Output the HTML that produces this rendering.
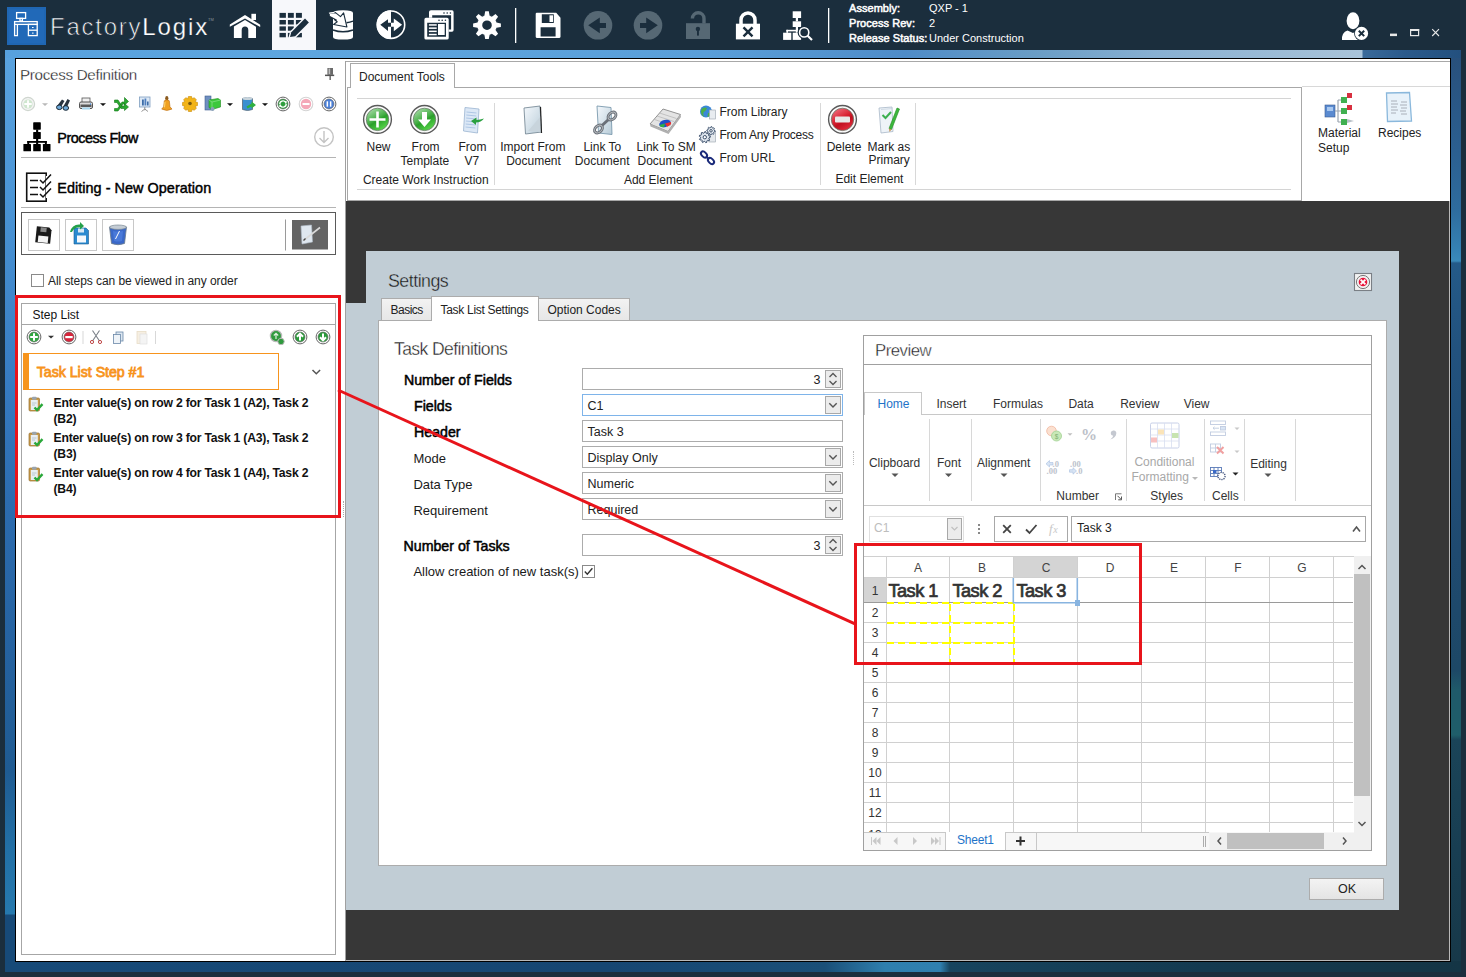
<!DOCTYPE html>
<html><head><meta charset="utf-8">
<style>
*{box-sizing:border-box;margin:0;padding:0}
html,body{width:1466px;height:977px;overflow:hidden;background:#1b2e3d;font-family:"Liberation Sans",sans-serif;color:#1a1a1a}
.a{position:absolute}
.t{position:absolute;white-space:nowrap;line-height:1}
svg{position:absolute;overflow:visible}
</style></head><body>
<!-- top bar -->
<div class="a" style="left:0;top:0;width:1466px;height:50px;background:#1b2e3d"></div>

<!-- TOPBAR -->
<svg class="a" style="left:0;top:0" width="1466" height="50" viewBox="0 0 1466 50">
 <!-- logo -->
 <rect x="7" y="7" width="39" height="38" fill="#1f66b3"/>
 <rect x="9" y="9" width="35" height="34" fill="#2169b8"/>
 <g fill="none" stroke="#fff" stroke-width="1.3">
  <rect x="16.6" y="12.6" width="9" height="5.8"/>
  <rect x="20" y="18.4" width="2.4" height="2.6"/>
  <rect x="14.6" y="21.6" width="22.6" height="2.8"/>
  <path d="M14.6 24.4V35.6H17.4V24.4"/>
  <rect x="28.4" y="24.4" width="8.8" height="11.2"/>
  <path d="M28.4 30.2H37.2"/>
 </g>
 <rect x="32" y="27" width="1.6" height="1" fill="#fff"/>
 <rect x="32" y="32.6" width="1.6" height="1" fill="#fff"/>
 <!-- home -->
 <g fill="#fff">
  <polygon points="229.8,24.6 245,15 260.2,24.8 260.2,27 245,18.6 229.8,26.8"/>
  <rect x="251.4" y="13.8" width="4.6" height="6.2"/>
  <path d="M233.9 26.6 L245 20 L256 26.8 V38.1 H248.3 V30.2 A3.3 3.6 0 0 0 241.7 30.2 V38.1 H233.9 Z"/>
 </g>
 <!-- active tab -->
 <rect x="272" y="0" width="44" height="50" fill="#f7f8fb"/>
 <g fill="#1b2e3d">
  <rect x="279.5" y="12.9" width="6.4" height="4.9"/><rect x="287.9" y="12.9" width="5.9" height="4.9"/><rect x="295.9" y="12.9" width="6" height="4.9"/>
  <rect x="279.5" y="20" width="6.4" height="4.5"/><rect x="287.9" y="20" width="5.9" height="4.5"/><rect x="295.9" y="20" width="6" height="4.5"/>
  <rect x="279.5" y="26.4" width="6.4" height="4.3"/><rect x="287.9" y="26.4" width="5.9" height="4.3"/><rect x="295.9" y="26.4" width="6" height="4.3"/>
  <rect x="279.5" y="32.9" width="6.4" height="4.4"/><rect x="287.9" y="32.9" width="5.9" height="4.4"/><rect x="295.9" y="32.9" width="6" height="4.4"/>
 </g>
 <path d="M289.5 37.5 L291 32 L305 18 L309.5 22.5 L295.5 36.5 Z" fill="#f7f8fb" stroke="#f7f8fb" stroke-width="2"/>
 <path d="M290 37 L291.3 32.3 L305 18.6 L308.9 22.5 L295.2 36.2 Z" fill="#1b2e3d"/>
 <!-- database -->
 <path d="M333 13 Q333 10.3 343 10.3 Q353 10.3 353 13 V37 Q353 39.6 343 39.6 Q333 39.6 333 37 Z" fill="#fff"/>
 <path d="M333 30 Q343 33.6 353 30" fill="none" stroke="#1b2e3d" stroke-width="1.4"/>
 <path d="M346.5 22.8 Q350 22.4 353 21.2" fill="none" stroke="#1b2e3d" stroke-width="1.4"/>
 <path d="M329.2 13 L335.5 12.6 L340.5 16.6 L343.6 12.9 L346.9 27 L333.6 24.5 L337.2 21.8 L334.6 19.7 L336.3 19.9 L329.3 16.3 Z" fill="#fff" stroke="#1b2e3d" stroke-width="1.1" stroke-linejoin="round"/>
 <path d="M329 13.3 Q331 12.4 334.5 12.7" fill="none" stroke="#fff" stroke-width="1.2"/>
 <!-- circle arrows -->
 <circle cx="391" cy="24.7" r="13.7" fill="none" stroke="#fff" stroke-width="1.6"/>
 <path d="M391 10.3 A14.4 14.4 0 0 0 391 39.1 Z" fill="#fff"/>
 <path d="M380.3 24.7 L388 19.2 V22.8 H391 V26.8 H388 V30.9 Z" fill="#1b2e3d"/>
 <path d="M402.1 24.7 L393.8 18.5 V22.8 H391 V26.8 H393.8 V31.2 Z" fill="#fff"/>
 <!-- windows -->
 <g fill="#fff">
  <path d="M429 12 Q429 10.3 431 10.3 H452 Q453.6 10.3 453.6 12 V30 Q453.6 31.8 452 31.8 H448.7 V29.6 H451.1 V15.2 H432.2 V17.7 H429 Z"/>
  <path d="M424.4 19.5 Q424.4 17.7 426 17.7 H447 Q448.7 17.7 448.7 19.5 V38 Q448.7 39.5 447 39.5 H426 Q424.4 39.5 424.4 38 Z M427.2 22.7 V36.7 H446 V22.7 Z"/>
  <rect x="428.9" y="24.2" width="7.8" height="1.5"/><rect x="428.9" y="27.4" width="7.8" height="1.5"/><rect x="428.9" y="30.6" width="7.8" height="1.5"/><rect x="428.9" y="33.8" width="7.8" height="1.5"/>
  <rect x="438" y="24" width="6.7" height="11"/>
 </g>
 <g fill="#1b2e3d"><circle cx="444" cy="13" r="0.8"/><circle cx="447.2" cy="13" r="0.8"/><circle cx="450.4" cy="13" r="0.8"/><circle cx="439" cy="20.2" r="0.8"/><circle cx="442.2" cy="20.2" r="0.8"/><circle cx="445.4" cy="20.2" r="0.8"/></g>
 <!-- gear -->
 <g transform="translate(487 25.2)">
  <path fill="#fff" fill-rule="evenodd" d="M-2.61 -9.44 L-1.81 -13.88 L1.81 -13.88 L2.61 -9.44 L4.83 -8.53 L8.53 -11.10 L11.10 -8.53 L8.53 -4.83 L9.44 -2.61 L13.88 -1.81 L13.88 1.81 L9.44 2.61 L8.53 4.83 L11.10 8.53 L8.53 11.10 L4.83 8.53 L2.61 9.44 L1.81 13.88 L-1.81 13.88 L-2.61 9.44 L-4.83 8.53 L-8.53 11.10 L-11.10 8.53 L-8.53 4.83 L-9.44 2.61 L-13.88 1.81 L-13.88 -1.81 L-9.44 -2.61 L-8.53 -4.83 L-11.10 -8.53 L-8.53 -11.10 L-4.83 -8.53Z M4.8 0 A4.8 4.8 0 1 0 -4.8 0 A4.8 4.8 0 1 0 4.8 0Z"/>
  <circle r="10.3" fill="none" stroke="#fff" stroke-width="0.1"/>
 </g>
 <rect x="515" y="8" width="1.3" height="35" fill="#fff"/>
 <!-- save -->
 <path fill="#fff" fill-rule="evenodd" d="M536.8 12.8 H556.2 L560.5 17.7 V36.8 Q560.5 37.9 559.4 37.9 H536.8 Q535.7 37.9 535.7 36.8 V13.9 Q535.7 12.8 536.8 12.8 Z M541.8 14.3 V22.9 H553.8 V14.3 Z M540.6 27.2 V36.4 H555.6 V27.2 Z"/>
 <rect x="549.5" y="15.3" width="3.5" height="6.7" fill="#fff"/>
 <!-- back / fwd -->
 <circle cx="598" cy="25.3" r="14.3" fill="#566874"/>
 <path d="M588.2 25.3 L599.8 17.4 V22.9 H606 V28.1 H599.8 V33.3 Z" fill="#1b2e3d"/>
 <circle cx="648" cy="25.3" r="14.3" fill="#566874"/>
 <path d="M657.8 25.3 L646.2 17.4 V22.9 H640 V28.1 H646.2 V33.3 Z" fill="#1b2e3d"/>
 <!-- open lock -->
 <rect x="686" y="23.2" width="24" height="15.8" fill="#566874"/>
 <path d="M692.4 18.5 A5.8 5.8 0 0 1 704 18.5 V23.5" fill="none" stroke="#566874" stroke-width="3.4"/>
 <circle cx="697.9" cy="28.9" r="2.2" fill="#1b2e3d"/>
 <rect x="697" y="29" width="1.9" height="6.6" fill="#1b2e3d"/>
 <!-- lock x -->
 <rect x="735.9" y="23.7" width="24.1" height="15.7" fill="#fff"/>
 <path d="M741 24 V20 A7 7 0 0 1 755 20 V24" fill="none" stroke="#fff" stroke-width="3.5"/>
 <path d="M743.5 27.3 L752.5 36.3 M752.5 27.3 L743.5 36.3" stroke="#1b2e3d" stroke-width="2.4"/>
 <!-- hierarchy -->
 <g fill="#fff">
  <rect x="792.7" y="11.3" width="8.4" height="6.7"/>
  <rect x="795.8" y="18" width="2.2" height="3.3"/>
  <rect x="792.7" y="21.3" width="8.4" height="5.7"/>
  <rect x="795.8" y="27" width="2.2" height="5.7"/>
  <rect x="786.4" y="29.8" width="10" height="1.6"/>
  <rect x="786.4" y="29.8" width="1.6" height="3"/>
  <rect x="783.1" y="32.7" width="8.2" height="7.2"/>
  <rect x="792.7" y="32.7" width="8.4" height="7.2"/>
 </g>
 <circle cx="804.2" cy="32.4" r="6.6" fill="#1b2e3d"/>
 <circle cx="804.2" cy="32.4" r="4.6" fill="none" stroke="#fff" stroke-width="1.6"/>
 <path d="M807.6 35.8 L812 40" stroke="#fff" stroke-width="2.2"/>
 <rect x="828" y="8" width="1.3" height="35" fill="#fff"/>
 <!-- user -->
 <g fill="#fff">
  <ellipse cx="1353" cy="20.8" rx="6.4" ry="8.5"/>
  <path d="M1342 40 Q1341.5 32.5 1347.5 30.5 L1353 33 L1357 31 L1360 40 Z"/>
  <circle cx="1361.5" cy="33.4" r="7.4" fill="#1b2e3d"/>
  <circle cx="1361.5" cy="33.4" r="6.6"/>
 </g>
 <path d="M1358.8 30.7 L1364.2 36.1 M1364.2 30.7 L1358.8 36.1" stroke="#1b2e3d" stroke-width="2"/>
 <!-- window controls -->
 <rect x="1390" y="33.6" width="7" height="2.5" fill="#e8e8e8"/>
 <rect x="1410.6" y="29.6" width="8" height="6" fill="none" stroke="#e8e8e8" stroke-width="1.2"/>
 <rect x="1410" y="29" width="9.2" height="2" fill="#e8e8e8"/>
 <path d="M1432.2 29.2 L1439 36 M1439 29.2 L1432.2 36" stroke="#e8e8e8" stroke-width="1.1"/>
</svg>
<div class="t" style="left:50px;top:14.5px;font-size:24px;color:#f4f6f8;letter-spacing:1.75px;-webkit-text-stroke:0.7px #1b2e3d">Factory<span style="color:#fff;letter-spacing:1.9px;-webkit-text-stroke:0.25px #1b2e3d">Logix</span></div>
<div class="t" style="left:208px;top:18px;font-size:4px;color:#8a949c">TM</div>
<div class="t" style="left:849px;top:1px;font-size:11px;line-height:15.2px;color:#fff;letter-spacing:0.05px;-webkit-text-stroke:0.5px #fff">Assembly:<br>Process Rev:<br>Release Status:</div>
<div class="t" style="left:929px;top:1px;font-size:11px;line-height:15.2px;color:#fff">QXP - 1<br>2<br>Under Construction</div>
<!-- blue window frame -->
<div class="a" style="left:5px;top:50px;width:10px;height:922px;background:linear-gradient(180deg,#5aa3df 0px,#4b95d6 150px,#3a80c6 300px,#2c6cb0 450px,#2562a0 600px,#1f5b92 720px,#2270a6 800px,#2679ae 864px,#174a78 865px,#174a78 922px)"></div>
<div class="a" style="left:1450px;top:50px;width:11px;height:922px;background:linear-gradient(180deg,#284f7a 0px,#2b5f90 100px,#2e6c9e 160px,#3582b4 200px,#3a8aba 211px,#245a88 213px,#22527e 300px,#1f4a70 500px,#1d4866 620px,#1f5a6a 640px,#1f5e6a 685px,#1a4458 690px,#183e52 800px,#173848 922px)"></div>
<div class="a" style="left:5px;top:50px;width:1456px;height:8px;background:linear-gradient(90deg,#57a1de 0px,#5ea6df 300px,#5a9fd9 700px,#4f8cc8 900px,#6a9dc5 1030px,#88b0d2 1150px,#a7c2d8 1340px,#a9c4da 1357px,#3a6a9a 1358px,#2b5a8b 1400px,#23507e 1456px)"></div>
<div class="a" style="left:5px;top:961px;width:1456px;height:11px;background:linear-gradient(90deg,#174a78 0px,#164672 600px,#1a4f78 820px,#2f7fae 880px,#3080b0 935px,#17445e 945px,#143a50 1200px,#143545 1456px)"></div>
<!-- inner black border -->
<div class="a" style="left:15px;top:58px;width:1436px;height:904px;background:#000"></div>
<!-- left panel white -->
<div class="a" style="left:16px;top:59px;width:329px;height:902px;background:#fff"></div>
<!-- right white ribbon area -->
<div class="a" style="left:345px;top:59px;width:1105px;height:142px;background:#fff"></div>
<!-- dark workspace -->
<div class="a" style="left:346px;top:201px;width:1103px;height:759px;background:#373737"></div>
<div class="a" style="left:345px;top:201px;width:1px;height:760px;background:#9a9a9a"></div>
<div class="a" style="left:346px;top:960px;width:1104px;height:1px;background:#b8b8b8"></div>
<div class="a" style="left:1449px;top:201px;width:1px;height:760px;background:#b8b8b8"></div>

<!-- LEFT PANEL CONTENT -->
<div class="t" style="left:20px;top:67.4px;font-size:15.2px;color:#111;letter-spacing:-0.3px;-webkit-text-stroke:0.3px #fff">Process Definition</div>
<svg class="a" style="left:0;top:0" width="346" height="300">
 <!-- pin -->
 <rect x="327.4" y="68" width="5.6" height="6.8" fill="#6a6a6a"/>
 <rect x="328.6" y="68.6" width="1.6" height="5.6" fill="#bdbdbd"/>
 <rect x="325" y="74.6" width="9.2" height="1.5" fill="#555"/>
 <rect x="329.5" y="76" width="1.3" height="4" fill="#555"/>
 <!-- toolbar row -->
 <circle cx="28" cy="104" r="6.6" fill="#f4f4f4" stroke="#cfd6cf" stroke-width="1.2"/>
 <circle cx="28" cy="104" r="4.6" fill="#cfe6cf"/>
 <path d="M28 100.3V107.7M24.3 104H31.7" stroke="#fff" stroke-width="1.8"/>
 <path d="M42 103.3H48L45 106Z" fill="#b8b8b8"/>
 <!-- binoculars -->
 <g transform="translate(56 98)">
  <path d="M1 8 L6 1.5 L8.5 3 L4 10.5Z" fill="#2a3440"/>
  <path d="M7 9 L11.5 1 L14 2.5 L10 11Z" fill="#2a3440"/>
  <ellipse cx="3.3" cy="9.3" rx="2.8" ry="2.3" fill="#6ea8d8" stroke="#1d2a36" stroke-width="1"/>
  <ellipse cx="9.8" cy="10" rx="2.8" ry="2.3" fill="#6ea8d8" stroke="#1d2a36" stroke-width="1"/>
 </g>
 <!-- printer -->
 <g transform="translate(79 98)">
  <rect x="3" y="0" width="8" height="5" fill="#f0f0f0" stroke="#555" stroke-width="0.8"/>
  <rect x="0.5" y="4" width="13" height="6.5" rx="1.5" fill="#dcdcdc" stroke="#444" stroke-width="0.9"/>
  <rect x="1.5" y="6.5" width="11" height="2.5" fill="#5a5a5a"/>
  <rect x="3" y="9.5" width="8" height="2" fill="#a8d8f0"/>
  <rect x="11" y="5.5" width="1" height="1.2" fill="#2a7de0"/>
 </g>
 <path d="M100 103.3H106L103 106Z" fill="#111"/>
 <!-- green shuffle -->
 <path d="M114.5 100 H118 L122 106 H124.5 V103.5 L128.5 107 L124.5 110.5 V108.5 H121 L117 102.5 H114.5Z M114.5 108.5 H117.5 L119 106.5 L120.5 104.5 L122 102 H124.5 V97.5 L128.5 101.5 L124.5 105 V104 H123 L119.5 109 L118 111 H114.5Z" fill="#2aa830" stroke="#137a18" stroke-width="0.6"/>
 <!-- presentation -->
 <g transform="translate(139 96.5)">
  <rect x="0.5" y="0.5" width="10.5" height="10" fill="#dce8f5" stroke="#7f9fc0" stroke-width="0.8"/>
  <rect x="3" y="3" width="1.8" height="6" fill="#3d6da8"/><rect x="5.5" y="2" width="1.8" height="7" fill="#5080c0"/><rect x="8" y="5" width="1.6" height="4" fill="#3d6da8"/>
  <path d="M5.8 10.5 V13.8 M5.8 12.5 L2.5 15 M5.8 12.5 L9 15" stroke="#888" stroke-width="0.9"/>
 </g>
 <!-- bell -->
 <g transform="translate(161.5 95.8)">
  <ellipse cx="5.3" cy="2.5" rx="1.6" ry="2.4" fill="#8a5a20"/>
  <path d="M2.8 5 Q5.3 3 7.8 5 L8.5 11 L10.5 13.3 Q5.3 16 0.2 13.3 L2.1 11Z" fill="#f0a020" stroke="#b86a10" stroke-width="0.6"/>
  <path d="M3.5 6 L3 11.5" stroke="#ffd870" stroke-width="1"/>
 </g>
 <!-- gear yellow -->
 <g transform="translate(190 104)">
  <path d="M-1.6 -7.5H1.6L2.2 -5.3L4.3 -6.3L6.3 -4.3L5.3 -2.2L7.5 -1.6V1.6L5.3 2.2L6.3 4.3L4.3 6.3L2.2 5.3L1.6 7.5H-1.6L-2.2 5.3L-4.3 6.3L-6.3 4.3L-5.3 2.2L-7.5 1.6V-1.6L-5.3 -2.2L-6.3 -4.3L-4.3 -6.3L-2.2 -5.3Z" fill="#f2b418" stroke="#c98a08" stroke-width="0.6"/>
  <circle cx="0" cy="-0.5" r="1.8" fill="#7a5a10"/>
 </g>
 <!-- green box icon -->
 <g transform="translate(205 96)">
  <rect x="0" y="0" width="6" height="14" fill="#6f8fc0" stroke="#40608f" stroke-width="0.6"/>
  <path d="M4 4 L13 2.5 L15.5 4 L15.5 11 L7 13.5 L4 11.5Z" fill="#3cc83c" stroke="#1f8a1f" stroke-width="0.6"/>
  <path d="M4 4 L7 6 L15.5 4 M7 6 V13.5" stroke="#9ae89a" stroke-width="0.6" fill="none"/>
  <circle cx="7.5" cy="13" r="2" fill="#8aa0b8"/>
 </g>
 <path d="M227 103.3H233L230 106Z" fill="#111"/>
 <!-- bin with arrow -->
 <g transform="translate(241.5 96.5)">
  <path d="M1 2 Q6 0 11 2 V13 Q6 15 1 13Z" fill="#3a8fd0" stroke="#5a6a78" stroke-width="0.8"/>
  <ellipse cx="6" cy="2" rx="5" ry="1.5" fill="#c8d4dc"/>
  <path d="M5 10 L10 7 L10 5 L14.5 8.5 L10 12 L10 10 L6 12Z" fill="#30b040"/>
 </g>
 <path d="M262 103.3H268L265 106Z" fill="#111"/>
 <!-- circles -->
 <circle cx="283" cy="104" r="6.9" fill="#fff" stroke="#666" stroke-width="1"/>
 <circle cx="283" cy="104" r="5" stroke="#606060" stroke-width="0.6" fill="#2e9e3e"/>
 <path d="M279.8 104.3 A3.2 3.2 0 0 1 285.6 102.2 M286.2 103.7 A3.2 3.2 0 0 1 280.4 105.8" fill="none" stroke="#fff" stroke-width="1.3"/><path d="M284 101 L287.2 101.6 L285.8 104Z M282 107 L278.8 106.4 L280.2 104Z" fill="#fff"/>
 <circle cx="306" cy="104" r="6.8" fill="#fff" stroke="#d4d4d4" stroke-width="1.1"/>
 <circle cx="306" cy="104" r="5.2" fill="#f4a8b8"/>
 <rect x="302.5" y="103" width="7" height="2" fill="#fff"/>
 <circle cx="329" cy="104" r="6.9" fill="#fff" stroke="#666" stroke-width="1"/>
 <circle cx="329" cy="104" r="5" stroke="#606060" stroke-width="0.6" fill="#4a7fd8"/>
 <rect x="326.6" y="101.3" width="1.5" height="5.4" fill="#fff"/><rect x="329.9" y="101.3" width="1.5" height="5.4" fill="#fff"/>
 <!-- hierarchy black -->
 <g fill="#000">
  <rect x="33.2" y="122.3" width="7.6" height="7.4" rx="0.6"/>
  <rect x="36.1" y="129.5" width="2.1" height="3"/>
  <rect x="33.2" y="132" width="7.6" height="7" rx="0.6"/>
  <rect x="36.1" y="138.8" width="2.1" height="5.5"/>
  <rect x="27.3" y="141" width="19.5" height="1.8"/>
  <rect x="27.3" y="141" width="1.9" height="3.5"/><rect x="44.9" y="141" width="1.9" height="3.5"/>
  <rect x="23.4" y="144" width="7.6" height="7.3" rx="0.6"/>
  <rect x="33.2" y="144" width="7.6" height="7.3" rx="0.6"/>
  <rect x="42.9" y="144" width="7.6" height="7.3" rx="0.6"/>
 </g>
 <circle cx="324" cy="137" r="9.3" fill="none" stroke="#c4c4c4" stroke-width="1.4"/>
 <path d="M324 131 V142.5 M319.5 138 L324 142.5 L328.5 138" fill="none" stroke="#c4c4c4" stroke-width="1.4"/>
 <rect x="21" y="157" width="315" height="1" fill="#b4b4b4"/>
 <!-- checklist -->
 <rect x="26.7" y="173.2" width="19.5" height="28" fill="none" stroke="#111" stroke-width="1.6"/>
 <rect x="46" y="176" width="6" height="22" fill="#fff"/>
 <g stroke="#111" stroke-width="1.5" fill="none">
  <path d="M30 180.5H38M30 187.5H38M30 194.5H38"/>
  <path d="M40 180 L43 183 L51 174.5 M40 187 L43 190 L51 181.5 M40 194 L43 197 L51 188.5"/>
 </g>
 <rect x="21" y="207" width="315" height="1" fill="#b4b4b4"/>
 <!-- button box -->
 <rect x="21.5" y="212.5" width="314" height="42" fill="none" stroke="#5a5a5a" stroke-width="1"/>
 <rect x="28.5" y="219.5" width="31" height="31" fill="#fff" stroke="#c8c8c8" stroke-width="1"/>
 <rect x="65.5" y="219.5" width="31" height="31" fill="#fff" stroke="#c8c8c8" stroke-width="1"/>
 <rect x="102.5" y="219.5" width="31" height="31" fill="#fff" stroke="#c8c8c8" stroke-width="1"/>
 <rect x="285" y="219.5" width="1" height="31" fill="#9a9a9a"/>
 <rect x="292" y="220" width="36" height="29.5" fill="#646464"/>
 <!-- floppy black -->
 <path d="M36 227 H48.5 L51 229.5 V243 H36Z" fill="#1a1a1a" transform="rotate(6 43 235)"/>
 <rect x="38.5" y="236" width="10" height="6.5" fill="#f4f4f4" transform="rotate(6 43 235)"/>
 <rect x="40" y="227.5" width="6" height="4.5" fill="#888" transform="rotate(6 43 235)"/>
 <!-- floppy blue with arrow -->
 <path d="M74 228 H86 L88.5 230.5 V244 H74Z" fill="#2a8ad0" stroke="#1a5a90" stroke-width="0.6"/>
 <rect x="77" y="235.5" width="9" height="7" fill="#f4f8fc"/>
 <rect x="78" y="228.5" width="6" height="4" fill="#d8e8f4"/>
 <path d="M70 232 Q72 224 80 224.5 L80 222 L84 226 L80 229.5 V227.2 Q74 227 72 232Z" fill="#24a04a"/>
 <!-- recycle bin -->
 <path d="M109.5 227 H126.5 L124.5 243.5 Q118 246 111.5 243.5Z" fill="#3a68c8" stroke="#6b7a88" stroke-width="0.8"/>
 <ellipse cx="118" cy="227.2" rx="8.5" ry="2.2" fill="#c4ccd4" stroke="#7a8894" stroke-width="0.7"/>
 <path d="M113 231 Q118 232 123 231 L122 241 Q118 242 114 241Z" fill="#5080e0" opacity="0.7"/>
 <path d="M119.5 231 L115.5 239" stroke="#fff" stroke-width="1"/>
 <!-- pen on tablet -->
 <path d="M301 226 L311.5 225 L312.5 242 L302 244Z" fill="#dfe7ef" stroke="#b0bcc8" stroke-width="0.6"/>
 <path d="M303.5 240.5 L320 227.5" stroke="#dadada" stroke-width="1.6"/>
 <path d="M303.5 240.5 L305.5 238.5" stroke="#444" stroke-width="1.2"/>
 <!-- checkbox -->
 <rect x="31.5" y="274.5" width="12" height="12" fill="#fff" stroke="#8a8a8a" stroke-width="1"/>
</svg>
<div class="t" style="left:57.3px;top:131.4px;font-size:14.4px;color:#000;letter-spacing:-0.48px;-webkit-text-stroke:0.45px #000">Process Flow</div>
<div class="t" style="left:57.3px;top:181.4px;font-size:14.4px;color:#000;letter-spacing:0.05px;-webkit-text-stroke:0.45px #000">Editing - New Operation</div>
<div class="t" style="left:48px;top:274.8px;font-size:12px;color:#222;letter-spacing:-0.07px">All steps can be viewed in any order</div>
<!-- step list -->
<div class="a" style="left:21px;top:303px;width:315px;height:652px;border:1px solid #a6a6a6"></div>
<div class="a" style="left:22px;top:324px;width:313px;height:1px;background:#a6a6a6"></div>
<div class="t" style="left:32.5px;top:308.7px;font-size:12px;color:#111">Step List</div>
<svg class="a" style="left:0;top:300px" width="346" height="220">
 <g transform="translate(0 -300)">
 <circle cx="34" cy="337" r="6.9" fill="#fff" stroke="#666" stroke-width="1"/>
 <circle cx="34" cy="337" r="5" stroke="#606060" stroke-width="0.6" fill="#2fa83e"/>
 <path d="M34 333.2V340.8M30.2 337H37.8" stroke="#fff" stroke-width="2"/>
 <path d="M48 335.8H54L51 338.5Z" fill="#333"/>
 <circle cx="69" cy="337" r="6.9" fill="#fff" stroke="#666" stroke-width="1"/>
 <circle cx="69" cy="337" r="5" stroke="#606060" stroke-width="0.6" fill="#d8243a"/>
 <rect x="65.3" y="336" width="7.4" height="2.2" fill="#fff"/>
 <rect x="82.5" y="331" width="1" height="13" fill="#d8d8d8"/>
 <!-- scissors -->
 <path d="M92.5 330.5 L99.5 341 M99.5 330.5 L92.5 341" stroke="#7a8088" stroke-width="1.1"/>
 <circle cx="92" cy="342" r="1.6" fill="none" stroke="#c04848" stroke-width="1"/>
 <circle cx="100" cy="342" r="1.6" fill="none" stroke="#c04848" stroke-width="1"/>
 <!-- copy -->
 <rect x="116" y="332" width="7" height="9" fill="#dce6f0" stroke="#6a88a8" stroke-width="0.8"/>
 <rect x="113.5" y="334.5" width="7" height="9" fill="#eef3f8" stroke="#6a88a8" stroke-width="0.8"/>
 <!-- paste disabled -->
 <rect x="137" y="331.5" width="9" height="12" fill="#f6efe2" stroke="#e8dcc8" stroke-width="0.8"/>
 <rect x="140" y="334" width="7" height="10" fill="#f4f4f4" stroke="#e0e0e0" stroke-width="0.7"/>
 <rect x="155" y="331" width="1" height="13" fill="#d8d8d8"/>
 <!-- find/search green -->
 <circle cx="276" cy="336" r="5.6" fill="#2f9a3e" stroke="#b8b8b8" stroke-width="1.3"/>
 <path d="M276 339 V333.5 M273.8 335.5 L276 333.3 L278.2 335.5" stroke="#dff0df" stroke-width="1.2" fill="none"/>
 <circle cx="281" cy="341.5" r="3.2" fill="#2f9a3e" stroke="#b8b8b8" stroke-width="1"/>
 <circle cx="300" cy="337" r="6.9" fill="#fff" stroke="#666" stroke-width="1"/>
 <circle cx="300" cy="337" r="5" stroke="#606060" stroke-width="0.6" fill="#2a9a3a"/>
 <path d="M300 340.5V334 M297 336.8L300 333.6L303 336.8" stroke="#fff" stroke-width="2" fill="none"/>
 <circle cx="323" cy="337" r="6.9" fill="#fff" stroke="#666" stroke-width="1"/>
 <circle cx="323" cy="337" r="5" stroke="#606060" stroke-width="0.6" fill="#2a9a3a"/>
 <path d="M323 333.5V340 M320 337.2L323 340.4L326 337.2" stroke="#fff" stroke-width="2" fill="none"/>
 <!-- orange item -->
 <rect x="23.5" y="353.5" width="255" height="36" fill="#fff" stroke="#f7941d" stroke-width="1"/>
 <rect x="23" y="353" width="6" height="37" fill="#f7941d"/>
 <path d="M312.5 370 L316.3 373.8 L320.1 370" fill="none" stroke="#555" stroke-width="1.5"/>
 </g>
</svg>
<div class="t" style="left:36.8px;top:365.2px;font-size:14.2px;color:#f7941d;letter-spacing:-0.03px;-webkit-text-stroke:0.8px #f7941d">Task List Step #1</div>
<svg class="a" style="left:28px;top:396px" width="16" height="17" viewBox="0 0 16 17">
 <rect x="1" y="2" width="10.5" height="13" rx="1.2" fill="#c89a48" stroke="#9a7030" stroke-width="0.7"/>
 <rect x="2.8" y="4" width="7" height="10" fill="#e8eef4"/>
 <rect x="4" y="0.8" width="4.6" height="3" rx="1" fill="#9aa4ae"/>
 <path d="M4 7H8.5M4 9H7" stroke="#b0bcc8" stroke-width="0.8"/>
 <path d="M6.5 11.5 L9 14 L14.5 8.2" fill="none" stroke="#2aa83a" stroke-width="2.4"/>
</svg>
<div class="t" style="left:53.5px;top:397.2px;font-size:12.2px;line-height:15.5px;font-weight:bold;color:#111;letter-spacing:-0.22px;margin-top:-1.1px">Enter value(s) on row 2 for Task 1 (A2), Task 2<br>(B2)</div>
<svg class="a" style="left:28px;top:431px" width="16" height="17" viewBox="0 0 16 17">
 <rect x="1" y="2" width="10.5" height="13" rx="1.2" fill="#c89a48" stroke="#9a7030" stroke-width="0.7"/>
 <rect x="2.8" y="4" width="7" height="10" fill="#e8eef4"/>
 <rect x="4" y="0.8" width="4.6" height="3" rx="1" fill="#9aa4ae"/>
 <path d="M4 7H8.5M4 9H7" stroke="#b0bcc8" stroke-width="0.8"/>
 <path d="M6.5 11.5 L9 14 L14.5 8.2" fill="none" stroke="#2aa83a" stroke-width="2.4"/>
</svg>
<div class="t" style="left:53.5px;top:432.2px;font-size:12.2px;line-height:15.5px;font-weight:bold;color:#111;letter-spacing:-0.22px;margin-top:-1.1px">Enter value(s) on row 3 for Task 1 (A3), Task 2<br>(B3)</div>
<svg class="a" style="left:28px;top:466px" width="16" height="17" viewBox="0 0 16 17">
 <rect x="1" y="2" width="10.5" height="13" rx="1.2" fill="#c89a48" stroke="#9a7030" stroke-width="0.7"/>
 <rect x="2.8" y="4" width="7" height="10" fill="#e8eef4"/>
 <rect x="4" y="0.8" width="4.6" height="3" rx="1" fill="#9aa4ae"/>
 <path d="M4 7H8.5M4 9H7" stroke="#b0bcc8" stroke-width="0.8"/>
 <path d="M6.5 11.5 L9 14 L14.5 8.2" fill="none" stroke="#2aa83a" stroke-width="2.4"/>
</svg>
<div class="t" style="left:53.5px;top:467.2px;font-size:12.2px;line-height:15.5px;font-weight:bold;color:#111;letter-spacing:-0.22px;margin-top:-1.1px">Enter value(s) on row 4 for Task 1 (A4), Task 2<br>(B4)</div>


<!-- RIBBON -->
<div class="a" style="left:345px;top:61px;width:1105px;height:1px;background:#a8a8a8"></div>
<div class="a" style="left:345px;top:61px;width:1px;height:900px;background:#a0a0a0"></div>
<div class="a" style="left:350px;top:63px;width:105px;height:25px;border:1px solid #a8a8a8;border-bottom:none;background:#fff"></div>
<div class="a" style="left:347px;top:87px;width:4px;height:1px;background:#a8a8a8"></div>
<div class="a" style="left:347px;top:87px;width:1px;height:114px;background:#a8a8a8"></div>
<div class="a" style="left:454px;top:87px;width:848px;height:1px;background:#a8a8a8"></div>
<div class="a" style="left:1301px;top:87px;width:1px;height:114px;background:#a8a8a8"></div>
<div class="a" style="left:1302px;top:86px;width:148px;height:1px;background:#d8d8d8"></div>
<div class="a" style="left:347px;top:200px;width:955px;height:1px;background:#a8a8a8"></div>
<div class="a" style="left:357px;top:98px;width:934px;height:1px;background:#d4d4d4"></div>
<div class="a" style="left:357px;top:189px;width:934px;height:1px;background:#d4d4d4"></div>
<div class="a" style="left:494px;top:103px;width:1px;height:82px;background:#d8d8d8"></div>
<div class="a" style="left:820px;top:103px;width:1px;height:82px;background:#d8d8d8"></div>
<div class="a" style="left:915px;top:103px;width:1px;height:82px;background:#d8d8d8"></div>
<div class="t" style="left:359px;top:70.6px;font-size:12px;color:#222">Document Tools</div>
<svg class="a" style="left:0;top:0" width="1466" height="200">
 <defs>
  <linearGradient id="gg" x1="0.2" y1="0" x2="0.8" y2="1"><stop offset="0" stop-color="#a8dca8"/><stop offset="0.45" stop-color="#48b048"/><stop offset="0.55" stop-color="#2aa02a"/><stop offset="1" stop-color="#60e050"/></linearGradient>
  <linearGradient id="rg" x1="0.2" y1="0" x2="0.8" y2="1"><stop offset="0" stop-color="#f07080"/><stop offset="0.45" stop-color="#d82030"/><stop offset="0.6" stop-color="#c01020"/><stop offset="1" stop-color="#e83040"/></linearGradient>
  <linearGradient id="docg" x1="0" y1="0" x2="1" y2="1"><stop offset="0" stop-color="#f4f8fc"/><stop offset="1" stop-color="#b8ccd8"/></linearGradient>
 </defs>
 <!-- New -->
 <circle cx="377.5" cy="119.4" r="13.9" fill="#fbfbfb" stroke="#5a5a5a" stroke-width="1.4"/>
 <circle cx="377.5" cy="119.4" r="11.2" fill="url(#gg)" stroke="#6a7a6a" stroke-width="0.8"/>
 <path d="M377.5 111.5V127.5M369.5 119.5H385.5" stroke="#fff" stroke-width="2.6"/>
 <!-- From template -->
 <circle cx="424.5" cy="119.4" r="13.9" fill="#fbfbfb" stroke="#5a5a5a" stroke-width="1.4"/>
 <circle cx="424.5" cy="119.4" r="11.2" fill="url(#gg)" stroke="#6a7a6a" stroke-width="0.8"/>
 <path d="M422 112H427V119.5H431L424.5 127L418 119.5H422Z" fill="#fff"/>
 <!-- From V7 -->
 <path d="M465 107.5 L479 109 L477.5 133 L463.5 131Z" fill="#dce8f6" stroke="#9ab4d0" stroke-width="0.8"/>
 <g stroke="#9ab8dc" stroke-width="0.7"><path d="M466.5 112L476.5 113M466.3 115L476.3 116M466.1 118L476 119M465.9 121L475.8 122M465.7 124L475.6 125M465.5 127L475.4 128"/></g>
 <path d="M484 118.5 Q481 122.5 476 122.5 L476 125 L471 121 L476.5 117.5 L476.5 120 Q480 119.5 484 118.5Z" fill="#2aa040"/>
 <!-- Import from document -->
 <path d="M524 108 L540 106 L541.5 132 L525.5 134Z" fill="url(#docg)" stroke="#7a8c98" stroke-width="0.9"/>
 <path d="M528 131 L541 116 L541.5 132Z" fill="#c8d4dc"/>
 <path d="M540.5 107 L541.5 133" stroke="#222" stroke-width="1.2"/>
 <!-- Link to document -->
 <path d="M597 106 L611 107.5 L612 134.5 L598.5 133Z" fill="url(#docg)" stroke="#7a9aae" stroke-width="0.9"/>
 <g fill="none" stroke="#6a7078" stroke-width="3">
  <ellipse cx="598.5" cy="129" rx="4.5" ry="3.2" transform="rotate(-45 598.5 129)"/>
  <ellipse cx="612" cy="116" rx="4.5" ry="3.2" transform="rotate(-45 612 116)"/>
  <path d="M602 125.5 L608.5 119.5"/>
 </g>
 <g fill="none" stroke="#b8bcc0" stroke-width="1"><ellipse cx="598.5" cy="129" rx="4.5" ry="3.2" transform="rotate(-45 598.5 129)"/><ellipse cx="612" cy="116" rx="4.5" ry="3.2" transform="rotate(-45 612 116)"/></g>
 <!-- Link to SM -->
 <path d="M650 124 L663 109 L680.5 114.5 L668 131.5Z" fill="#e4e4e4" stroke="#888" stroke-width="0.9"/>
 <path d="M650 124 L650.5 126.5 L668.5 134 L681 117 L680.5 114.5 L668 131.5Z" fill="#b0b0b0"/>
 <g stroke="#aaa" stroke-width="0.6"><path d="M657 116L674 121.5M659.5 113L676.5 118.5M654.5 119.5L671 125"/></g>
 <ellipse cx="665" cy="123.5" rx="6" ry="3.5" fill="#2050c8" transform="rotate(-15 665 123.5)"/>
 <path d="M665 123.5 L671 122 A6 3.5 -15 0 1 667 126.8Z" fill="#e83030"/>
 <path d="M665 123.5 L659.5 125 A6 3.5 -15 0 0 664 127.2Z" fill="#30b040"/>
 <!-- from library globe -->
 <circle cx="706" cy="111.5" r="6" fill="#3a88d8"/>
 <path d="M701.5 109 Q704 106.5 707 108 Q706 111 703.5 112 Q702.5 115 704.5 117 Q701 115.5 701 111.5Z" fill="#4ab048"/>
 <path d="M708 113 Q710 112 711.5 114 Q710 116.5 707.5 117Z" fill="#4ab048"/>
 <rect x="709.5" y="110" width="6" height="9" fill="#e8ecf0" stroke="#9aa4ae" stroke-width="0.6"/>
 <!-- from any process gears -->
 <rect x="709" y="131" width="6.5" height="11" fill="#e4e8ec" stroke="#98a2ac" stroke-width="0.6"/>
 <path fill-rule="evenodd" d="M711.00 126.60 L711.82 126.68 L712.19 127.94 L712.72 128.22 L713.97 127.83 L714.49 128.47 L713.86 129.61 L714.04 130.20 L715.20 130.80 L715.12 131.62 L713.86 131.99 L713.58 132.52 L713.97 133.77 L713.33 134.29 L712.19 133.66 L711.60 133.84 L711.00 135.00 L710.18 134.92 L709.81 133.66 L709.28 133.38 L708.03 133.77 L707.51 133.13 L708.14 131.99 L707.96 131.40 L706.80 130.80 L706.88 129.98 L708.14 129.61 L708.42 129.08 L708.03 127.83 L708.67 127.31 L709.81 127.94 L710.40 127.76Z M712.30 130.80 A1.3 1.3 0 1 0 709.70 130.80 A1.3 1.3 0 1 0 712.30 130.80Z" fill="#e8eef4" stroke="#3a4e6a" stroke-width="0.9"/>
 <path fill-rule="evenodd" d="M704.80 131.60 L705.77 131.69 L706.24 133.25 L706.90 133.56 L708.40 132.91 L709.09 133.60 L708.44 135.10 L708.75 135.76 L710.31 136.23 L710.40 137.20 L708.94 137.93 L708.75 138.64 L709.65 140.00 L709.09 140.80 L707.50 140.42 L706.90 140.84 L706.72 142.46 L705.77 142.71 L704.80 141.40 L704.07 141.34 L702.88 142.46 L702.00 142.05 L702.10 140.42 L701.58 139.90 L699.95 140.00 L699.54 139.12 L700.66 137.93 L700.60 137.20 L699.29 136.23 L699.54 135.28 L701.16 135.10 L701.58 134.50 L701.20 132.91 L702.00 132.35 L703.36 133.25 L704.07 133.06Z M706.50 137.20 A1.7 1.7 0 1 0 703.10 137.20 A1.7 1.7 0 1 0 706.50 137.20Z" fill="#dfe6ee" stroke="#3a4e6a" stroke-width="1"/>
 <!-- from url chain -->
 <g fill="none" stroke="#1a2a7a" stroke-width="2">
  <ellipse cx="704" cy="154.5" rx="3.6" ry="2.3" transform="rotate(45 704 154.5)"/>
  <ellipse cx="711" cy="161" rx="3.6" ry="2.3" transform="rotate(45 711 161)"/>
  <path d="M706 156.5 L709 159.2"/>
 </g>
 <!-- delete -->
 <circle cx="842.5" cy="119.4" r="13.9" fill="#fbfbfb" stroke="#5a5a5a" stroke-width="1.4"/>
 <circle cx="842.5" cy="119.4" r="11.2" fill="url(#rg)" stroke="#6a7a6a" stroke-width="0.8"/>
 <rect x="835" y="116.5" width="15" height="6" rx="1" fill="#e8e8e8"/>
 <!-- mark as primary -->
 <path d="M879 108 L892 107 L893 131.5 L881 133Z" fill="#eef3f8" stroke="#a8b8c8" stroke-width="0.8"/>
 <path d="M881 109.5 L892.5 108.5" stroke="#c8d4e0" stroke-width="0.8"/>
 <path d="M882.5 115 L885.5 118 L891 112" fill="none" stroke="#3cb050" stroke-width="2"/>
 <path d="M889 128.5 L897 108 L899.5 109 L891.5 129.5Z" fill="#3cb83c" stroke="#208a20" stroke-width="0.6"/>
 <path d="M889 128.5 L889.5 132 L891.5 129.5Z" fill="#c89050"/>
 <!-- material setup -->
 <g transform="translate(1324 92)">
  <rect x="1" y="13" width="10" height="12" fill="#5a8ad0" stroke="#3a5a90" stroke-width="0.6"/>
  <rect x="3" y="15" width="6" height="4" fill="#a8c8f0"/>
  <path d="M11 19 H16 M14 8 V30 M14 8 H19 M14 19 H19 M14 30 H19" stroke="#9aa4b0" stroke-width="1.2" fill="none"/>
  <rect x="17" y="5" width="6" height="6" fill="#40b050"/>
  <rect x="23" y="1" width="5" height="5" fill="#d83040"/>
  <rect x="17" y="16" width="6" height="6" fill="#40b050"/>
  <rect x="23" y="13" width="5" height="5" fill="#d83040"/>
  <rect x="17" y="27" width="6" height="6" fill="#40b050"/>
  <path d="M23 27 L30 29 L23 31" fill="#b8c0c8"/>
 </g>
 <!-- recipes -->
 <path d="M1386.5 93 L1409.5 92.5 L1411.5 121 L1387.5 121.5Z" fill="#e8f2fa" stroke="#8ab8dc" stroke-width="1.3"/>
 <g stroke="#9aa0a8" stroke-width="0.8"><path d="M1391 101H1397M1391 104H1398M1391 107H1397M1391 110H1398M1391 113H1396M1401 102H1407M1400 105H1407M1401 108H1407M1400 111H1406M1401 114H1407"/></g>
</svg>
<div class="t" style="left:366.5px;top:140.5px;font-size:12px;color:#222;">New</div>
<div class="t" style="left:411.6px;top:140.5px;font-size:12px;color:#222;">From</div>
<div class="t" style="left:400.5px;top:154.6px;font-size:12px;color:#222;">Template</div>
<div class="t" style="left:458.5px;top:140.5px;font-size:12px;color:#222;">From</div>
<div class="t" style="left:464.5px;top:154.6px;font-size:12px;color:#222;">V7</div>
<div class="t" style="left:500.2px;top:140.5px;font-size:12px;color:#222;">Import From</div>
<div class="t" style="left:506.2px;top:154.6px;font-size:12px;color:#222;">Document</div>
<div class="t" style="left:583.4px;top:140.5px;font-size:12px;color:#222;">Link To</div>
<div class="t" style="left:574.8px;top:154.6px;font-size:12px;color:#222;">Document</div>
<div class="t" style="left:636.6px;top:140.5px;font-size:12px;color:#222;">Link To SM</div>
<div class="t" style="left:637.5px;top:154.6px;font-size:12px;color:#222;">Document</div>
<div class="t" style="left:719.5px;top:106.3px;font-size:12px;color:#222;">From Library</div>
<div class="t" style="left:719.5px;top:129.2px;font-size:12px;color:#222;letter-spacing:-0.25px">From Any Process</div>
<div class="t" style="left:719.5px;top:152.2px;font-size:12px;color:#222;">From URL</div>
<div class="t" style="left:826.7px;top:140.5px;font-size:12px;color:#222;">Delete</div>
<div class="t" style="left:867.6px;top:140.5px;font-size:12px;color:#222;">Mark as</div>
<div class="t" style="left:868.5px;top:154.4px;font-size:12px;color:#222;">Primary</div>
<div class="t" style="left:362.9px;top:173.5px;font-size:12px;color:#222;">Create Work Instruction</div>
<div class="t" style="left:623.9px;top:173.5px;font-size:12px;color:#222;">Add Element</div>
<div class="t" style="left:835.4px;top:173.1px;font-size:12px;color:#222;">Edit Element</div>
<div class="t" style="left:1318px;top:126.7px;font-size:12px;color:#222;">Material</div>
<div class="t" style="left:1318px;top:142.1px;font-size:12px;color:#222;">Setup</div>
<div class="t" style="left:1378px;top:126.7px;font-size:12px;color:#222;">Recipes</div>

<!-- settings dialog -->
<div class="a" style="left:366px;top:251px;width:1033px;height:659px;background:#c1cdd5"></div>
<div class="a" style="left:346px;top:303px;width:20px;height:607px;background:#c1cdd5"></div>

<!-- SETTINGS DIALOG CONTENT -->
<div class="t" style="left:388px;top:273.2px;font-size:17.8px;color:#1a1a1a;letter-spacing:-0.5px;-webkit-text-stroke:0.35px #c1cdd5">Settings</div>
<svg class="a" style="left:1354px;top:273px" width="18" height="18" viewBox="0 0 18 18">
 <rect x="0.5" y="0.5" width="17" height="17" fill="#f2f2f2" stroke="#7a7f85" stroke-width="1.1"/>
 <circle cx="9" cy="9" r="6.6" fill="none" stroke="#6a6a6a" stroke-width="0.9"/>
 <circle cx="9" cy="9" r="4.3" fill="#e8143a"/>
 <path d="M6.6 6.6L11.4 11.4M11.4 6.6L6.6 11.4" stroke="#fff" stroke-width="1.8"/>
</svg>
<!-- tabs -->
<div class="a" style="left:381px;top:298px;width:51px;height:23px;background:linear-gradient(#f2f2f2,#e6e6e6);border:1px solid #acacac;border-bottom:none"></div>
<div class="a" style="left:538px;top:298px;width:92px;height:23px;background:linear-gradient(#f2f2f2,#e6e6e6);border:1px solid #acacac;border-bottom:none"></div>
<div class="a" style="left:378px;top:320px;width:1009px;height:546px;background:#fff;border:1px solid #acacac"></div>
<div class="a" style="left:431px;top:296px;width:108px;height:25px;background:#fff;border:1px solid #acacac;border-bottom:none"></div>
<div class="t" style="left:390.5px;top:304.2px;font-size:12px;color:#222;letter-spacing:-0.5px">Basics</div>
<div class="t" style="left:440.5px;top:304.2px;font-size:12px;color:#222;letter-spacing:-0.3px">Task List Settings</div>
<div class="t" style="left:547.4px;top:304.2px;font-size:12px;color:#222">Option Codes</div>
<div class="t" style="left:394px;top:340.7px;font-size:17.6px;color:#1a1a1a;letter-spacing:-0.62px;-webkit-text-stroke:0.35px #fff">Task Definitions</div>
<div class="t" style="left:403.9px;top:372.8px;font-size:14.2px;color:#000;letter-spacing:0px;-webkit-text-stroke:0.5px #000">Number of Fields</div>
<div class="t" style="left:414px;top:398.6px;font-size:14.2px;color:#000;-webkit-text-stroke:0.5px #000">Fields</div>
<div class="t" style="left:414px;top:424.5px;font-size:14.2px;color:#000;-webkit-text-stroke:0.5px #000">Header</div>
<div class="t" style="left:413.4px;top:452.0px;font-size:13px;color:#1a1a1a;">Mode</div>
<div class="t" style="left:413.4px;top:477.8px;font-size:13px;color:#1a1a1a;">Data Type</div>
<div class="t" style="left:413.4px;top:503.6px;font-size:13px;color:#1a1a1a;">Requirement</div>
<div class="t" style="left:403.5px;top:538.5px;font-size:14.2px;color:#000;letter-spacing:0px;-webkit-text-stroke:0.5px #000">Number of Tasks</div>
<div class="t" style="left:413.4px;top:565.3px;font-size:13px;color:#1a1a1a;">Allow creation of new task(s)</div>
<div class="a" style="left:582px;top:368px;width:261px;height:22px;background:#fff;border:1px solid #acacac"></div>
<div class="t" style="left:813.5px;top:373.5px;font-size:12.5px;color:#222">3</div>
<svg class="a" style="left:825px;top:370px" width="16" height="18" viewBox="0 0 16 18">
 <rect x="0.5" y="0.5" width="15" height="17" fill="#ececec" stroke="#a8a8a8"/>
 <path d="M4.5 7L8 3.5L11.5 7M4.5 11L8 14.5L11.5 11" fill="none" stroke="#555" stroke-width="1.3"/>
</svg>
<div class="a" style="left:582px;top:394px;width:261px;height:22px;background:#fff;border:1px solid #7eb4ea"></div>
<div class="t" style="left:587.5px;top:399.5px;font-size:12.5px;color:#222">C1</div>
<svg class="a" style="left:825px;top:396px" width="16" height="18" viewBox="0 0 16 18">
 <rect x="0.5" y="0.5" width="15" height="17" fill="#ececec" stroke="#a8a8a8"/>
 <path d="M4.3 7.3L8 11L11.7 7.3" fill="none" stroke="#555" stroke-width="1.4"/>
</svg>
<div class="a" style="left:582px;top:420px;width:261px;height:22px;background:#fff;border:1px solid #acacac"></div>
<div class="t" style="left:587.5px;top:425.5px;font-size:12.5px;color:#222">Task 3</div>
<div class="a" style="left:582px;top:446px;width:261px;height:22px;background:#fff;border:1px solid #acacac"></div>
<div class="t" style="left:587.5px;top:451.5px;font-size:12.5px;color:#222">Display Only</div>
<svg class="a" style="left:825px;top:448px" width="16" height="18" viewBox="0 0 16 18">
 <rect x="0.5" y="0.5" width="15" height="17" fill="#ececec" stroke="#a8a8a8"/>
 <path d="M4.3 7.3L8 11L11.7 7.3" fill="none" stroke="#555" stroke-width="1.4"/>
</svg>
<div class="a" style="left:582px;top:472px;width:261px;height:22px;background:#fff;border:1px solid #acacac"></div>
<div class="t" style="left:587.5px;top:477.5px;font-size:12.5px;color:#222">Numeric</div>
<svg class="a" style="left:825px;top:474px" width="16" height="18" viewBox="0 0 16 18">
 <rect x="0.5" y="0.5" width="15" height="17" fill="#ececec" stroke="#a8a8a8"/>
 <path d="M4.3 7.3L8 11L11.7 7.3" fill="none" stroke="#555" stroke-width="1.4"/>
</svg>
<div class="a" style="left:582px;top:498px;width:261px;height:22px;background:#fff;border:1px solid #acacac"></div>
<div class="t" style="left:587.5px;top:503.5px;font-size:12.5px;color:#222">Required</div>
<svg class="a" style="left:825px;top:500px" width="16" height="18" viewBox="0 0 16 18">
 <rect x="0.5" y="0.5" width="15" height="17" fill="#ececec" stroke="#a8a8a8"/>
 <path d="M4.3 7.3L8 11L11.7 7.3" fill="none" stroke="#555" stroke-width="1.4"/>
</svg>
<div class="a" style="left:582px;top:534px;width:261px;height:22px;background:#fff;border:1px solid #acacac"></div>
<div class="t" style="left:813.5px;top:539.5px;font-size:12.5px;color:#222">3</div>
<svg class="a" style="left:825px;top:536px" width="16" height="18" viewBox="0 0 16 18">
 <rect x="0.5" y="0.5" width="15" height="17" fill="#ececec" stroke="#a8a8a8"/>
 <path d="M4.5 7L8 3.5L11.5 7M4.5 11L8 14.5L11.5 11" fill="none" stroke="#555" stroke-width="1.3"/>
</svg>
<svg class="a" style="left:581px;top:564px" width="16" height="16" viewBox="0 0 16 16">
 <rect x="1.5" y="1.5" width="12" height="12" fill="#fff" stroke="#8a8a8a"/>
 <path d="M3.8 7.6L6.3 10.2L11.4 4.3" fill="none" stroke="#333" stroke-width="1.4"/>
</svg>
<div class="a" style="left:853px;top:451px;width:1px;height:14px;border-left:1px dotted #bbb"></div>
<!-- OK button -->
<div class="a" style="left:1309px;top:878px;width:75px;height:22px;background:linear-gradient(#f3f3f3,#e4e4e4);border:1px solid #acacac"></div>
<div class="t" style="left:1338px;top:883px;font-size:12.5px;color:#222">OK</div>


<!-- PREVIEW -->
<div class="a" style="left:863px;top:335px;width:509px;height:516px;background:#fff;border:1px solid #a0a0a0"></div>
<div class="a" style="left:864px;top:364px;width:507px;height:1px;background:#a0a0a0"></div>
<div class="t" style="left:875px;top:343.2px;font-size:16.8px;color:#1a1a1a;letter-spacing:-0.5px;-webkit-text-stroke:0.35px #fff">Preview</div>
<!-- sheet tabs -->
<div class="a" style="left:864px;top:392px;width:58px;height:23px;border:1px solid #c8c8c8;border-bottom:none;background:#fff"></div>
<div class="a" style="left:921px;top:414px;width:450px;height:1px;background:#c8c8c8"></div>
<div class="a" style="left:864px;top:505px;width:507px;height:1px;background:#c8c8c8"></div>
<div class="a" style="left:929px;top:419px;width:1px;height:82px;background:#d8d8d8"></div>
<div class="a" style="left:971px;top:419px;width:1px;height:82px;background:#d8d8d8"></div>
<div class="a" style="left:1040px;top:419px;width:1px;height:82px;background:#d8d8d8"></div>
<div class="a" style="left:1126px;top:419px;width:1px;height:82px;background:#d8d8d8"></div>
<div class="a" style="left:1204px;top:419px;width:1px;height:82px;background:#d8d8d8"></div>
<div class="a" style="left:1244px;top:419px;width:1px;height:82px;background:#d8d8d8"></div>
<div class="a" style="left:1295px;top:419px;width:1px;height:82px;background:#d8d8d8"></div>
<div class="t" style="left:877.5px;top:398.4px;font-size:12px;color:#1e73c8">Home</div>
<div class="t" style="left:936.4px;top:398.4px;font-size:12px;color:#333">Insert</div>
<div class="t" style="left:993px;top:398.4px;font-size:12px;color:#333">Formulas</div>
<div class="t" style="left:1068.4px;top:398.4px;font-size:12px;color:#333">Data</div>
<div class="t" style="left:1120.2px;top:398.4px;font-size:12px;color:#333">Review</div>
<div class="t" style="left:1183.7px;top:398.4px;font-size:12px;color:#333">View</div>
<div class="t" style="left:868.9px;top:457.1px;font-size:12px;color:#333">Clipboard</div>
<div class="t" style="left:937px;top:457.1px;font-size:12px;color:#333">Font</div>
<div class="t" style="left:977px;top:457.1px;font-size:12px;color:#333">Alignment</div>
<div class="t" style="left:1250.2px;top:457.6px;font-size:12px;color:#333">Editing</div>
<div class="t" style="left:1056.3px;top:489.5px;font-size:12px;color:#333">Number</div>
<div class="t" style="left:1150.3px;top:489.5px;font-size:12px;color:#333">Styles</div>
<div class="t" style="left:1212px;top:489.5px;font-size:12px;color:#333">Cells</div>
<div class="t" style="left:1134.4px;top:455.8px;font-size:12px;color:#a8a8a8">Conditional</div>
<div class="t" style="left:1131.5px;top:470.5px;font-size:12px;color:#a8a8a8">Formatting</div>
<svg class="a" style="left:0;top:0" width="1466" height="977">
 <g fill="#555">
  <path d="M891.5 473.5H898.5L895 477Z"/><path d="M945 473.5H952L948.5 477Z"/><path d="M1000.5 473.5H1007.5L1004 477Z"/><path d="M1264.5 473.5H1271.5L1268 477Z"/>
 </g>
 <path d="M1192 477H1198L1195 480Z" fill="#b8b8b8"/>
 <!-- currency -->
 <circle cx="1051.5" cy="431" r="4.8" fill="#fbe0d0" stroke="#f0b8a0" stroke-width="0.8"/>
 <circle cx="1056.5" cy="436" r="5" fill="#c8e8b8" stroke="#a0d090" stroke-width="0.8"/>
 <text x="1054.8" y="438.5" font-size="6.5" fill="#80b070" font-family="Liberation Sans">$</text>
 <path d="M1067.5 433.3H1072.5L1070 435.8Z" fill="#c0c0c0"/>
 <text x="1081" y="440" font-size="16" fill="#bcc0c8" font-family="Liberation Serif" font-weight="bold">%</text>
 <path d="M1110.7 433 A2.8 2.8 0 1 1 1116.3 433.5 Q1116 437.5 1110.3 439.6 Q1113 437.5 1113.2 435.8 A2.8 2.8 0 0 1 1110.7 433 Z" fill="#c4c8d0"/>
 <!-- decimals -->
 <g font-family="Liberation Serif" font-size="8.5" font-weight="bold" fill="#bcc2cc" transform="translate(0 0)">
  <text x="1052.5" y="467">.0</text><text x="1046.5" y="474.3">.00</text>
  <text x="1070" y="467">.00</text><text x="1076" y="474.3">.0</text>
 </g>
 <path d="M1046 463.8 L1049.5 460.5 V462.5 H1053 V465 H1049.5 V467Z" fill="#d8e4f4" stroke="#a8c0e0" stroke-width="0.6"/>
 <path d="M1076.5 471 L1073 467.7 V469.7 H1069.5 V472.2 H1073 V474.2Z" fill="#d8e4f4" stroke="#a8c0e0" stroke-width="0.6"/>
 <!-- cond formatting -->
 <rect x="1150.5" y="423" width="28.5" height="25" rx="1.5" fill="#fff" stroke="#c8d0e8" stroke-width="1"/>
 <g stroke="#d8def0" stroke-width="0.8"><path d="M1157.5 423V448M1164.5 423V448M1171.5 423V448M1150.5 429H1179M1150.5 435H1179M1150.5 441H1179"/></g>
 <rect x="1158" y="429.5" width="6" height="5" fill="#fbe4b8"/>
 <rect x="1172" y="433" width="6.5" height="5" fill="#c8e4b0"/>
 <rect x="1151" y="437.5" width="6" height="5" fill="#f8c0c0"/>
 <!-- cells icons -->
 <g stroke="#c0cce0" stroke-width="0.9" fill="none">
  <rect x="1210.5" y="421" width="15" height="3.5"/><rect x="1210.5" y="432" width="15" height="3.5"/>
  <rect x="1220.5" y="426.5" width="5" height="3.5" fill="#d8e4f4"/>
  <path d="M1213 428.2H1219M1214.5 426.8L1213 428.2L1214.5 429.6"/>
  <rect x="1210.5" y="444" width="10" height="8"/><path d="M1210.5 448H1220.5M1215.5 444V452"/>
 </g>
 <path d="M1234.5 427.5H1239.5L1237 430Z M1234.5 450.5H1239.5L1237 453Z" fill="#c8c8c8"/>
 <path d="M1217 447L1223.5 453.5M1223.5 447L1217 453.5" stroke="#f0a0a0" stroke-width="2"/>
 <g stroke="#5a7ab8" stroke-width="0.9" fill="none">
  <rect x="1210.5" y="467.5" width="11" height="9"/><path d="M1210.5 470.5H1221.5M1210.5 473.5H1221.5M1214 467.5V476.5M1218 467.5V476.5"/>
 </g>
 <rect x="1213" y="470" width="3.5" height="3" fill="#3a6ac8"/>
 <circle cx="1221.5" cy="476" r="3.6" fill="#fff" stroke="#4a5a80" stroke-width="1.4" stroke-dasharray="1.3 0.9"/>
 <path d="M1232.5 472.5H1238.5L1235.5 475.5Z" fill="#222"/>
 <!-- dialog launcher -->
 <path d="M1115.5 500V493.8H1121.5" fill="none" stroke="#777" stroke-width="1"/>
 <path d="M1117.5 495.8L1121 499.3M1121.5 496.5V499.8H1118.2" fill="none" stroke="#555" stroke-width="1"/>
 <!-- name box -->
 <rect x="869.5" y="516.5" width="94" height="25" fill="#fff" stroke="#e0e0e0"/>
 <rect x="947.5" y="518.5" width="14" height="21" fill="#ececec" stroke="#a8a8a8"/>
 <path d="M951.5 527L954.5 530L957.5 527" fill="none" stroke="#c0c0c0" stroke-width="1.2"/>
 <g fill="#888"><rect x="978" y="524" width="2" height="2"/><rect x="978" y="528" width="2" height="2"/><rect x="978" y="532" width="2" height="2"/></g>
 <rect x="994.5" y="516.5" width="73" height="25" fill="#fff" stroke="#a8a8a8"/>
 <path d="M1003.2 525.2L1010.8 532.8M1010.8 525.2L1003.2 532.8" stroke="#444" stroke-width="1.8"/>
 <path d="M1026 529.5L1029.5 533L1036.5 525" fill="none" stroke="#444" stroke-width="1.8"/>
 <text x="1049" y="533" font-size="13" fill="#c8c8c8" font-family="Liberation Serif" font-style="italic">f<tspan font-size="10" dx="0.5">x</tspan></text>
 <rect x="1071.5" y="516.5" width="294" height="25" fill="#fff" stroke="#a8a8a8"/>
 <path d="M1353 531.5L1356.5 527L1360 531.5" fill="none" stroke="#555" stroke-width="1.6"/>
</svg>
<div class="t" style="left:874px;top:522.3px;font-size:12px;color:#bdbdbd">C1</div>
<div class="t" style="left:1077px;top:521.6px;font-size:12px;color:#222">Task 3</div>


<!-- SHEET -->
<svg class="a" style="left:0;top:0" width="1466" height="977">
 <rect x="864" y="556" width="490" height="276" fill="#fff"/>
 <rect x="1013" y="557" width="64.5" height="20" fill="#d4d4d4"/>
 <rect x="864" y="578" width="22" height="24" fill="#d4d4d4"/>
 <g stroke="#d0d0d0" stroke-width="1">
  <path d="M864 556.5H1354"/>
  <path d="M864 577.5H1353"/>
  <path d="M864 622.5H1353"/>
  <path d="M864 642.5H1353"/>
  <path d="M864 662.5H1353"/>
  <path d="M864 682.5H1353"/>
  <path d="M864 702.5H1353"/>
  <path d="M864 722.5H1353"/>
  <path d="M864 742.5H1353"/>
  <path d="M864 762.5H1353"/>
  <path d="M864 782.5H1353"/>
  <path d="M864 802.5H1353"/>
  <path d="M864 822.5H1353"/>
  <path d="M886.5 557V832"/>
  <path d="M949.5 557V832"/>
  <path d="M1013.5 557V832"/>
  <path d="M1077.5 557V832"/>
  <path d="M1141.5 557V832"/>
  <path d="M1205.5 557V832"/>
  <path d="M1269.5 557V832"/>
  <path d="M1333.5 557V832"/>
 </g>
 <path d="M864 602.5H1353" stroke="#9a9a9a" stroke-width="1"/>
 <!-- yellow dashes -->
 <g stroke="#ffff00" stroke-width="2" stroke-dasharray="7 4" fill="none">
  <path d="M887 603H1014"/><path d="M887 623H1014"/><path d="M887 643H1014"/>
  <path d="M950 604V662"/><path d="M1014 604V662"/>
 </g>
 <!-- selection -->
 <path d="M1013.3 578V602.8H1077.3V578" fill="none" stroke="#88b4e0" stroke-width="1.6"/>
 <rect x="1075" y="600" width="5" height="6" fill="#88b4e0"/>
 <!-- vertical scrollbar -->
 <rect x="1354" y="556" width="17" height="294" fill="#f0f0f0"/>
 <rect x="1354" y="574" width="16" height="222" fill="#c0c0c0"/>
 <path d="M1358.5 569L1362 565.5L1365.5 569" fill="none" stroke="#555" stroke-width="1.5"/>
 <path d="M1358.5 822L1362 825.5L1365.5 822" fill="none" stroke="#555" stroke-width="1.5"/>
 <!-- bottom tab bar -->
 <rect x="864" y="832" width="490" height="18" fill="#f7f7f7"/>
 <path d="M864 832.5H945.5M1005.5 832.5H1209" stroke="#c8c8c8"/>
 <rect x="945.5" y="832" width="60" height="18" fill="#fff"/>
 <path d="M945.5 832V850M1005.5 832V850M1036.5 832V850" stroke="#c8c8c8"/>
 <rect x="1209.5" y="833" width="144.5" height="17" fill="#f0f0f0"/>
 <rect x="1227" y="833" width="97" height="16" fill="#c0c0c0"/>
 <path d="M1203.5 836V847M1205.5 836V847" stroke="#999" stroke-width="0.8"/>
 <path d="M1221 837.5L1218 841L1221 844.5" fill="none" stroke="#555" stroke-width="1.5"/>
 <path d="M1343 837.5L1346 841L1343 844.5" fill="none" stroke="#555" stroke-width="1.5"/>
 <g fill="#c8c8c8">
  <rect x="871" y="837" width="1" height="8"/><path d="M876.5 837V845L872.5 841Z"/><path d="M880.5 837V845L876.5 841Z"/>
  <path d="M897.5 837V845L893.5 841Z"/>
  <path d="M913 837V845L917 841Z"/>
  <path d="M931 837V845L935 841Z"/><path d="M935 837V845L939 841Z"/><rect x="939.5" y="837" width="1" height="8"/>
 </g>
 <path d="M1020.5 836.5V845.5M1016 841H1025" stroke="#333" stroke-width="2"/>
</svg>
<div class="t" style="left:898px;width:40px;text-align:center;top:561.6px;font-size:12px;color:#444">A</div>
<div class="t" style="left:962px;width:40px;text-align:center;top:561.6px;font-size:12px;color:#444">B</div>
<div class="t" style="left:1026px;width:40px;text-align:center;top:561.6px;font-size:12px;color:#444">C</div>
<div class="t" style="left:1090px;width:40px;text-align:center;top:561.6px;font-size:12px;color:#444">D</div>
<div class="t" style="left:1154px;width:40px;text-align:center;top:561.6px;font-size:12px;color:#444">E</div>
<div class="t" style="left:1218px;width:40px;text-align:center;top:561.6px;font-size:12px;color:#444">F</div>
<div class="t" style="left:1282px;width:40px;text-align:center;top:561.6px;font-size:12px;color:#444">G</div>
<div class="t" style="left:864px;width:22px;text-align:center;top:584.8px;font-size:12px;color:#333">1</div>
<div class="t" style="left:864px;width:22px;text-align:center;top:607.3px;font-size:12px;color:#333">2</div>
<div class="t" style="left:864px;width:22px;text-align:center;top:627.3px;font-size:12px;color:#333">3</div>
<div class="t" style="left:864px;width:22px;text-align:center;top:647.3px;font-size:12px;color:#333">4</div>
<div class="t" style="left:864px;width:22px;text-align:center;top:667.3px;font-size:12px;color:#333">5</div>
<div class="t" style="left:864px;width:22px;text-align:center;top:687.3px;font-size:12px;color:#333">6</div>
<div class="t" style="left:864px;width:22px;text-align:center;top:707.3px;font-size:12px;color:#333">7</div>
<div class="t" style="left:864px;width:22px;text-align:center;top:727.3px;font-size:12px;color:#333">8</div>
<div class="t" style="left:864px;width:22px;text-align:center;top:747.3px;font-size:12px;color:#333">9</div>
<div class="t" style="left:864px;width:22px;text-align:center;top:767.3px;font-size:12px;color:#333">10</div>
<div class="t" style="left:864px;width:22px;text-align:center;top:787.3px;font-size:12px;color:#333">11</div>
<div class="t" style="left:864px;width:22px;text-align:center;top:807.3px;font-size:12px;color:#333">12</div>
<div class="a" style="left:864px;top:822px;width:22px;height:10px;overflow:hidden"><div class="t" style="left:0;width:22px;text-align:center;top:7px;font-size:12px;color:#333">13</div></div>
<div class="t" style="left:888.5px;top:582.2px;font-size:18.2px;color:#333;letter-spacing:-0.55px;-webkit-text-stroke:0.7px #333">Task 1</div>
<div class="t" style="left:952.5px;top:582.2px;font-size:18.2px;color:#333;letter-spacing:-0.55px;-webkit-text-stroke:0.7px #333">Task 2</div>
<div class="t" style="left:1016.5px;top:582.2px;font-size:18.2px;color:#333;letter-spacing:-0.55px;-webkit-text-stroke:0.7px #333">Task 3</div>
<div class="t" style="left:957px;top:833.9px;font-size:12px;color:#1e73c8;letter-spacing:-0.2px">Sheet1</div>


<div class="a" style="left:343px;top:501px;width:1px;height:16px;border-left:1px dotted #aaa"></div>
<!-- RED ANNOTATIONS -->
<svg class="a" style="left:0;top:0" width="1466" height="977">
 <rect x="16.5" y="296.5" width="323" height="220" fill="none" stroke="#e8141b" stroke-width="3"/>
 <rect x="855.5" y="544.5" width="285" height="119" fill="none" stroke="#e8141b" stroke-width="3"/>
 <path d="M338 390 L855 623.8" stroke="#e8141b" stroke-width="3"/>
</svg>

</body></html>
